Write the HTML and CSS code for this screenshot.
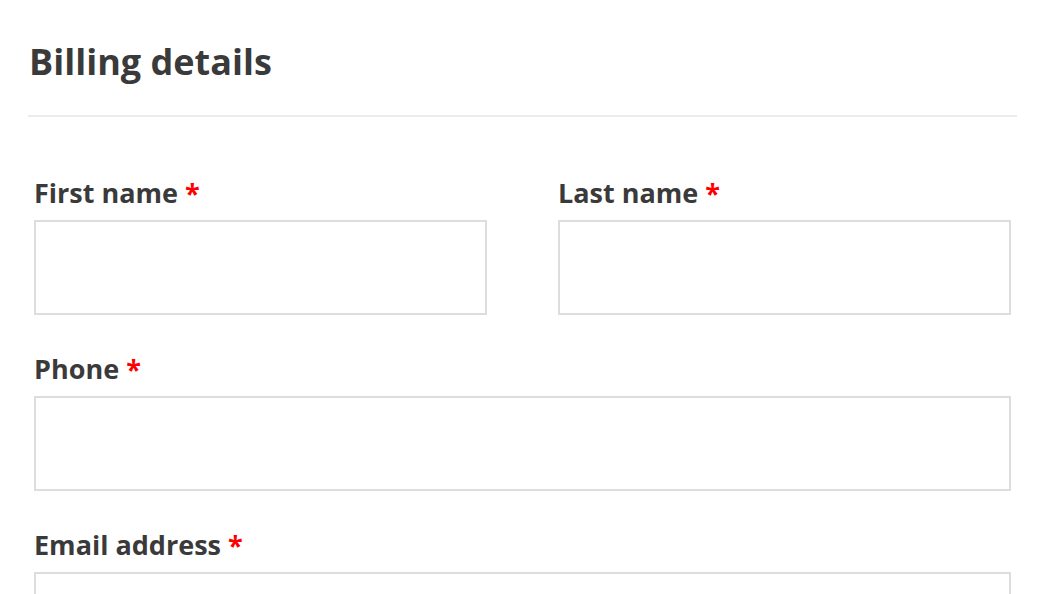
FILE: index.html
```html
<!DOCTYPE html>
<html lang="en">
<head>
  <meta charset="UTF-8" />
  <meta name="viewport" content="width=device-width, initial-scale=1.0"/>
  <title>Billing details</title>
  <link rel="stylesheet" href="styles.css">
</head>
<body>
  <div class="checkout">
    <h3 class="section-title">Billing details</h3>

    <form class="billing-form">
      <div class="form-row half">
        <div class="field">
          <label for="first-name">First name <abbr class="required" title="required">*</abbr></label>
          <input type="text" id="first-name" />
        </div>
        <div class="field">
          <label for="last-name">Last name <abbr class="required" title="required">*</abbr></label>
          <input type="text" id="last-name" />
        </div>
      </div>

      <div class="form-row">
        <div class="field">
          <label for="phone">Phone <abbr class="required" title="required">*</abbr></label>
          <input type="tel" id="phone" />
        </div>
      </div>

      <div class="form-row">
        <div class="field">
          <label for="email">Email address <abbr class="required" title="required">*</abbr></label>
          <input type="email" id="email" />
        </div>
      </div>
    </form>
  </div>
</body>
</html>
```

FILE: styles.css
```css
body {
  margin: 0;
  background: #fff;
  color: #3a3a3a;
  font-family: "Open Sans", "Noto Sans", sans-serif;
  overflow: hidden;
}

.checkout {
  padding: 0 40px 0 28px;
}

.section-title {
  margin: 0;
  padding: 40px 0 31px 1px;
  font-size: 36px;
  font-weight: 700;
  line-height: 44px;
  border-bottom: 2px solid #ebebeb;
}

.billing-form {
  padding: 58px 6px 0;
}

.form-row {
  margin-bottom: 36px;
}

.form-row.half {
  display: grid;
  grid-template-columns: 1fr 1fr;
  column-gap: 71px;
}

.field label {
  display: block;
  font-size: 27px;
  font-weight: 700;
  line-height: 36px;
  margin-bottom: 9px;
}

.required {
  color: #f00;
  text-decoration: none;
  border: 0;
}

.field input {
  display: block;
  box-sizing: border-box;
  width: 100%;
  height: 95px;
  margin: 0;
  border: 2px solid #ddd;
  border-radius: 0;
  background: #fff;
  outline: none;
}
```
